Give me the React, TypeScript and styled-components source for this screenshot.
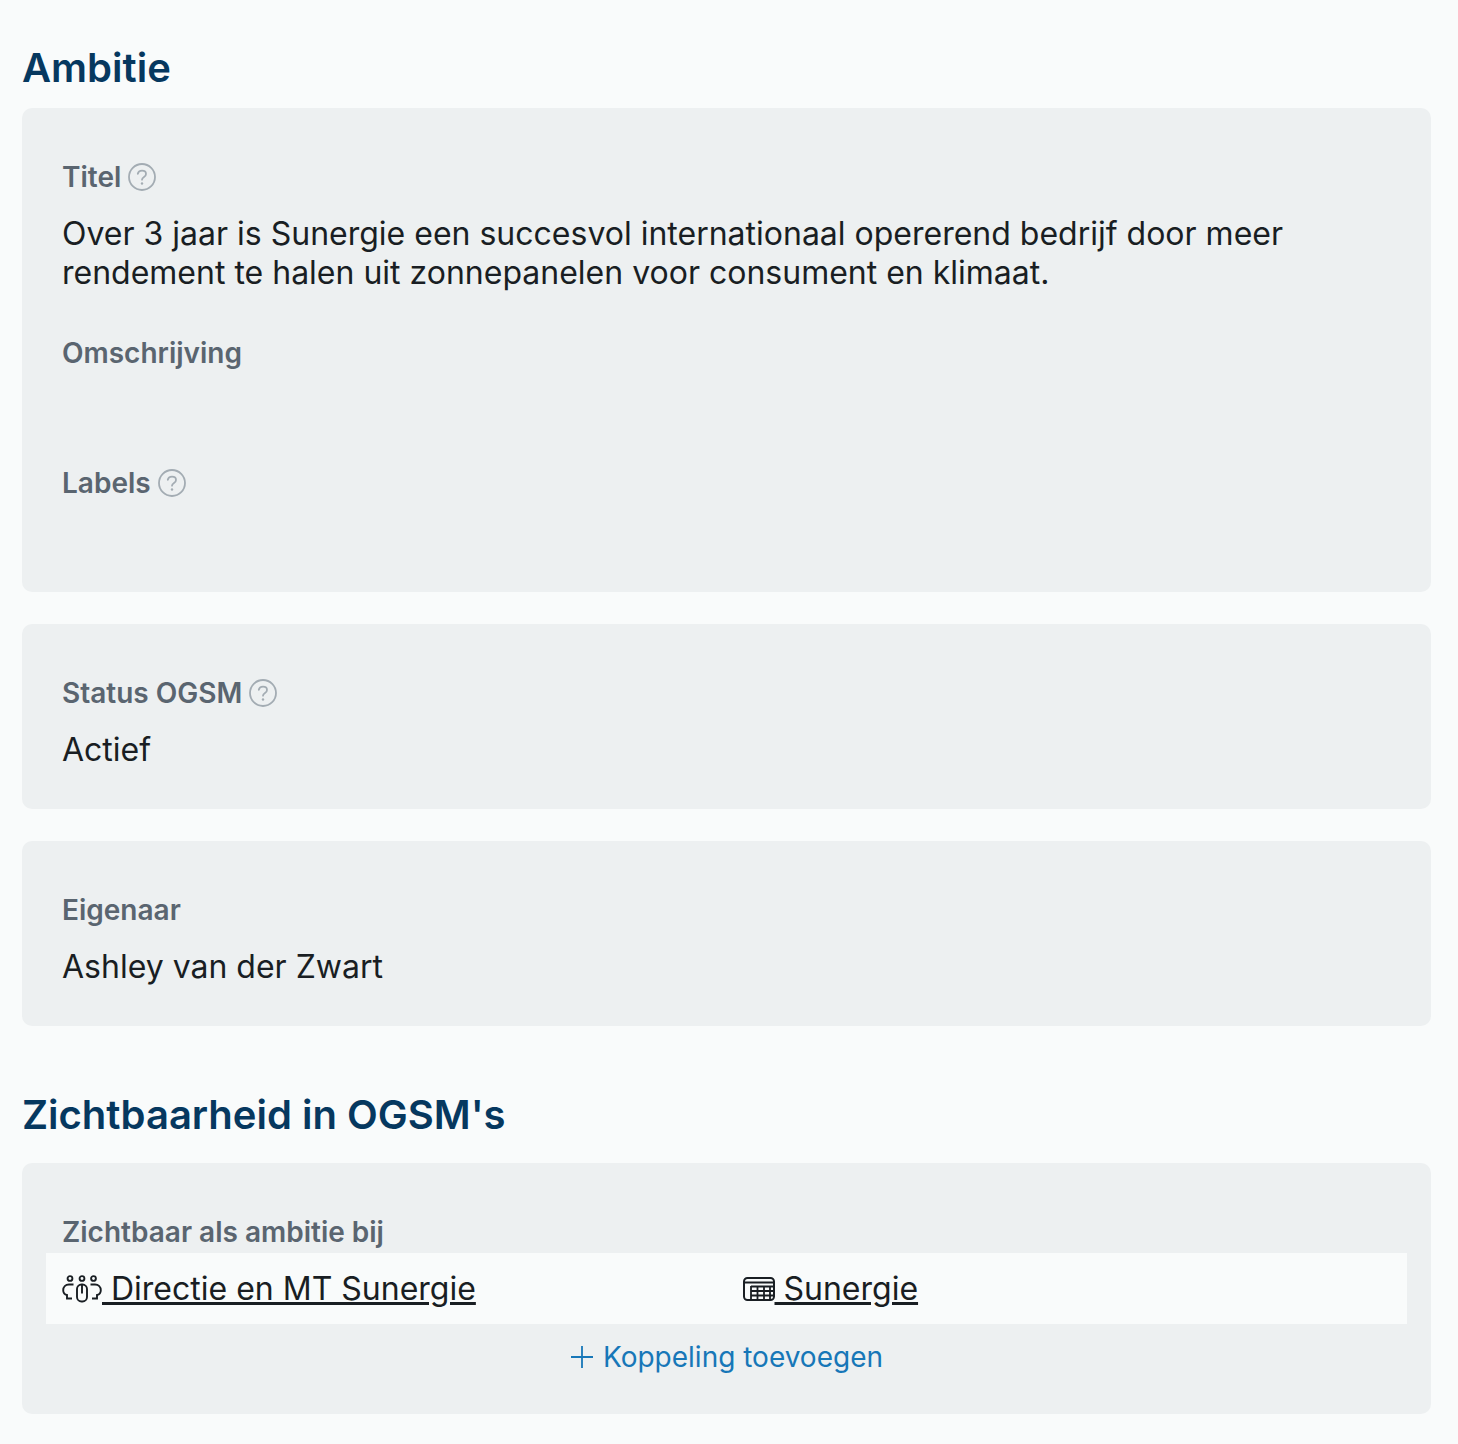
import React from "react";
import styled, { createGlobalStyle } from "styled-components";

const GlobalStyle = createGlobalStyle`
  html, body {
    margin: 0;
    background: #f9fbfb;
    font-family: Inter, "Liberation Sans", sans-serif;
    color: #191e23;
  }
`;

const HelpIcon = () => (
  <HelpSvg viewBox="0 0 28 28" fill="none">
    <circle cx="14" cy="14" r="13" stroke="#a3acb3" strokeWidth="1.8" />
    <path
      d="M9.800 10.800c.4-2 2-3.200 4.200-3.200 2.300 0 4 1.400 4 3.300 0 1.500-.9 2.300-2 3-1.100.7-2 1.300-2 2.800"
      stroke="#a3acb3"
      strokeWidth="1.800"
      strokeLinecap="round"
    />
    <circle cx="14" cy="20.500" r="1.200" fill="#a3acb3" />
  </HelpSvg>
);

const TeamIcon = () => (
  <LinkSvg width="40" height="28" viewBox="0 0 40 28" fill="none" stroke="#191e23" strokeWidth="1.900">
    <circle cx="8" cy="3.500" r="2.400" />
    <circle cx="20" cy="3.500" r="2.400" />
    <circle cx="31.500" cy="3.500" r="2.400" />
    <path d="M11.500 9.500H7C3.500 9.500 1.200 12 1.200 15.200c0 2.600 1.400 4.300 3.800 4.800v3.500h5" />
    <path d="M28.500 9.500H33c3.500 0 5.800 2.500 5.800 5.700 0 2.600-1.400 4.300-3.800 4.800v3.500h-5" />
    <rect x="15" y="9.500" width="10" height="17" rx="4.500" />
    <path d="M20 9.500v9" />
  </LinkSvg>
);

const TableIcon = () => (
  <LinkSvg width="32" height="24" viewBox="0 0 32 24" fill="none" stroke="#191e23" strokeWidth="2">
    <rect x="1" y="1" width="30" height="22" rx="3.500" />
    <path d="M1 5.500h30" />
    <path
      d="M8 9.500h22M8 14h22M8 18.500h22M8 9v14M14.500 9v14M21 9v14M27 9v14"
      strokeWidth="1.800"
    />
  </LinkSvg>
);

const PlusIcon = () => (
  <svg width="24" height="24" viewBox="0 0 24 24" fill="none" stroke="#1777b8" strokeWidth="1.800">
    <path d="M12 1v22M1 12h22" />
  </svg>
);

const App = () => (
  <Page>
    <GlobalStyle />
    <Heading>Ambitie</Heading>
    <Stack>
      <Card $height={484}>
        <Label>
          Titel <HelpIcon />
        </Label>
        <Value>
          Over 3 jaar is Sunergie een succesvol internationaal opererend bedrijf door meer
          <br />
          rendement te halen uit zonnepanelen voor consument en klimaat.
        </Value>
        <Label $top={42}>Omschrijving</Label>
        <Label $top={92}>
          Labels <HelpIcon />
        </Label>
      </Card>
      <Card $height={185}>
        <Label>
          Status OGSM <HelpIcon />
        </Label>
        <Value>Actief</Value>
      </Card>
      <Card $height={185}>
        <Label>Eigenaar</Label>
        <Value>Ashley van der Zwart</Value>
      </Card>
    </Stack>
    <SecondHeading>Zichtbaarheid in OGSM's</SecondHeading>
    <LinksCard>
      <LinksLabel>Zichtbaar als ambitie bij</LinksLabel>
      <LinkRow>
        <LinkCell>
          <TeamIcon />
          <u> Directie en MT Sunergie</u>
        </LinkCell>
        <LinkCell>
          <TableIcon />
          <u> Sunergie</u>
        </LinkCell>
      </LinkRow>
      <AddLink>
        <PlusIcon /> Koppeling toevoegen
      </AddLink>
    </LinksCard>
  </Page>
);

export default App;

const Page = styled.main`
  box-sizing: border-box;
  width: 1458px;
  height: 1444px;
  padding: 43px 27px 0 22px;
`;

const Heading = styled.h2`
  margin: 0 0 16px;
  font-size: 40px;
  line-height: 49px;
  font-weight: 600;
  color: #06385f;
`;

const SecondHeading = styled(Heading)`
  margin-top: 64px;
  margin-bottom: 24px;
`;

const Stack = styled.div`
  display: flex;
  flex-direction: column;
  gap: 32px;
`;

const Card = styled.section<{ $height: number }>`
  box-sizing: border-box;
  height: ${(p) => p.$height}px;
  padding: 50px 40px 0;
  background: #edf0f1;
  border-radius: 10px;
`;

const Label = styled.div<{ $top?: number }>`
  display: flex;
  align-items: center;
  gap: 7px;
  height: 38px;
  margin-top: ${(p) => p.$top ?? 0}px;
  font-size: 28px;
  font-weight: 600;
  color: #5a6570;
`;

const HelpSvg = styled.svg`
  width: 28px;
  height: 28px;
`;

const Value = styled.div`
  margin-top: 18px;
  font-size: 32px;
  line-height: 39px;
`;

const LinksCard = styled.section`
  box-sizing: border-box;
  height: 251px;
  padding: 50px 24px 0;
  background: #edf0f1;
  border-radius: 10px;
`;

const LinksLabel = styled.div`
  padding-left: 16px;
  height: 40px;
  line-height: 38px;
  font-size: 28px;
  font-weight: 600;
  color: #5a6570;
`;

const LinkRow = styled.div`
  display: grid;
  grid-template-columns: 1fr 1fr;
  align-items: center;
  height: 71px;
  background: #f9fbfb;
`;

const LinkCell = styled.div`
  display: flex;
  align-items: center;
  padding: 0 16px;
  font-size: 32px;
  white-space: pre;

  u {
    text-decoration-thickness: 3px;
    text-underline-offset: 2px;
  }
`;

const LinkSvg = styled.svg`
  flex: none;
`;

const AddLink = styled.div`
  display: flex;
  align-items: center;
  justify-content: center;
  gap: 9px;
  height: 66px;
  font-size: 28px;
  color: #1777b8;
`;
